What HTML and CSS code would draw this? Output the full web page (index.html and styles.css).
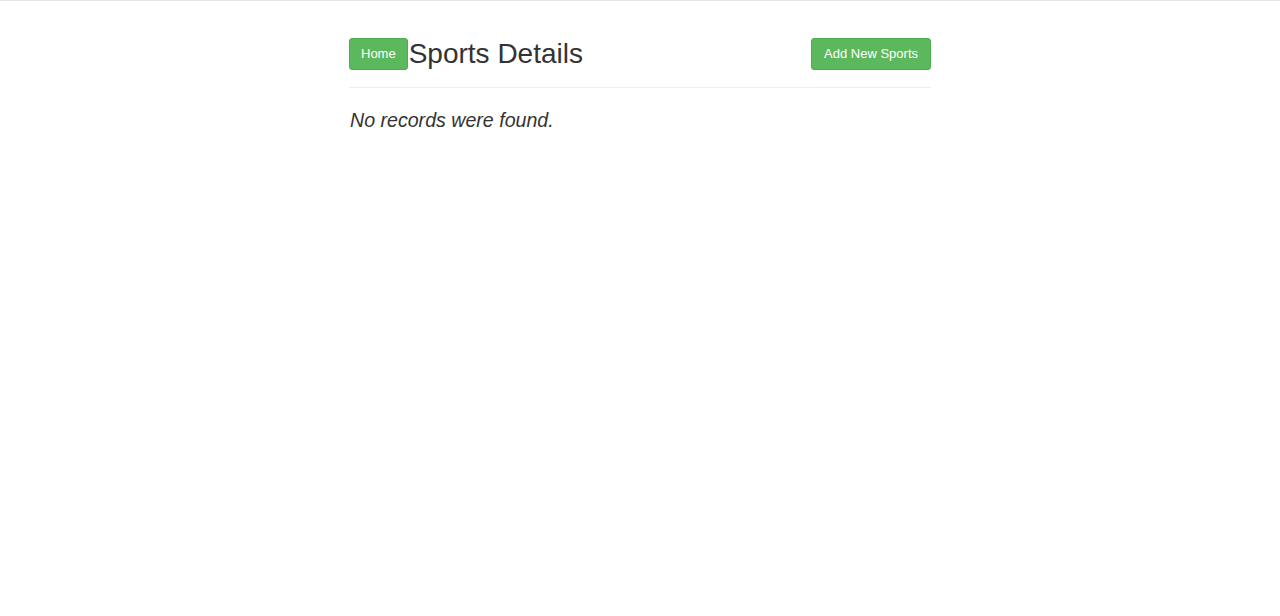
FILE: index.html
```html
<!DOCTYPE html>
<html lang="en">
<head>
  <meta charset="UTF-8">
  <title>Sports Details</title>
  <meta name="viewport" content="width=device-width, initial-scale=1.0">
  <link rel="stylesheet" href="styles.css">
</head>
<body>
  <div class="container">
    <div class="cabecalho">
      <div class="titulo">
        <a class="btn btn-success" href="#">Home</a>
        <h2>Sports Details</h2>
      </div>
      <a class="btn btn-success btn-novo" href="#">Add New Sports</a>
    </div>
    <hr>
    <p class="vazio">No records were found.</p>
  </div>
</body>
</html>
```

FILE: styles.css
```css
body {
  font-family: 'Liberation Sans', Arial, sans-serif;
  background: #fff;
  margin: 0;
  color: #333;
  border-top: 1px solid #e5e5ea;
}
.container {
  width: 582px;
  margin: 0 auto;
  padding-top: 37px;
}
.cabecalho {
  display: flex;
  justify-content: space-between;
  align-items: center;
}
.titulo {
  display: flex;
  align-items: center;
}
.titulo h2 {
  margin: 0 0 0 1px;
  font-size: 28px;
  font-weight: normal;
  line-height: 32px;
  color: #333;
}
.btn {
  display: inline-block;
  padding: 6px 11px;
  font-size: 13px;
  line-height: 18px;
  border: 1px solid #4cae4c;
  border-radius: 3px;
  text-decoration: none;
  color: #fff;
}
.btn-novo {
  padding: 6px 12px;
}
.btn-success {
  background-color: #5cb85c;
}
hr {
  margin: 17px 0 0;
  border: 0;
  border-top: 1px solid #eee;
}
.vazio {
  margin: 19px 0 0 1px;
  font-size: 19.6px;
  font-style: italic;
  line-height: 26px;
}
```
